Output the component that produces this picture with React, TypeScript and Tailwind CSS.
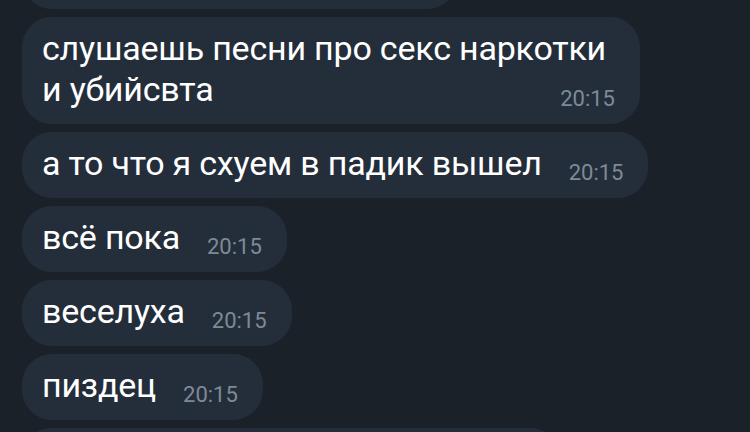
type Msg = { text: string; time: string };

const messages: Msg[] = [
  { text: "а то что я схуем в падик вышел", time: "20:15" },
  { text: "всё пока", time: "20:15" },
  { text: "веселуха", time: "20:15" },
  { text: "пиздец", time: "20:15" },
];

const Time = ({ value }: { value: string }) => (
  <span className="relative top-[5px] shrink-0 text-[22px] leading-none text-[#7e8a98]">{value}</span>
);

const Bubble = ({ text, time }: Msg) => (
  <div className="flex items-baseline gap-[27px] self-start rounded-[30px] bg-[#242e3b] pl-5 pr-[25px] pt-[11px] pb-[14px]">
    <span className="text-[34px] leading-[41px] tracking-[-0.2px] text-white">{text}</span>
    <Time value={time} />
  </div>
);

export default function App() {
  return (
    <div className="h-[432px] w-[750px] overflow-hidden bg-[#1b2129] font-['Roboto',sans-serif]">
      <div className="-mt-[57px] flex flex-col gap-2 pl-[22px]">
        <div className="h-[66px] w-[435px] rounded-[30px] bg-[#242e3b]" />

        <div className="self-start rounded-[30px] bg-[#242e3b] pl-5 pr-[25px] pt-[11px] pb-[14px]">
          <div className="pr-[9px] text-[34px] leading-[41px] tracking-[-0.2px] text-white">слушаешь песни про секс наркотки</div>
          <div className="flex items-baseline justify-between">
            <span className="text-[34px] leading-[41px] tracking-[-0.2px] text-white">и убийсвта</span>
            <Time value="20:15" />
          </div>
        </div>

        {messages.map((m, i) => (
          <Bubble key={i} {...m} />
        ))}

        <div className="h-[66px] w-[538px] rounded-[30px] bg-[#242e3b]" />
      </div>
    </div>
  );
}
